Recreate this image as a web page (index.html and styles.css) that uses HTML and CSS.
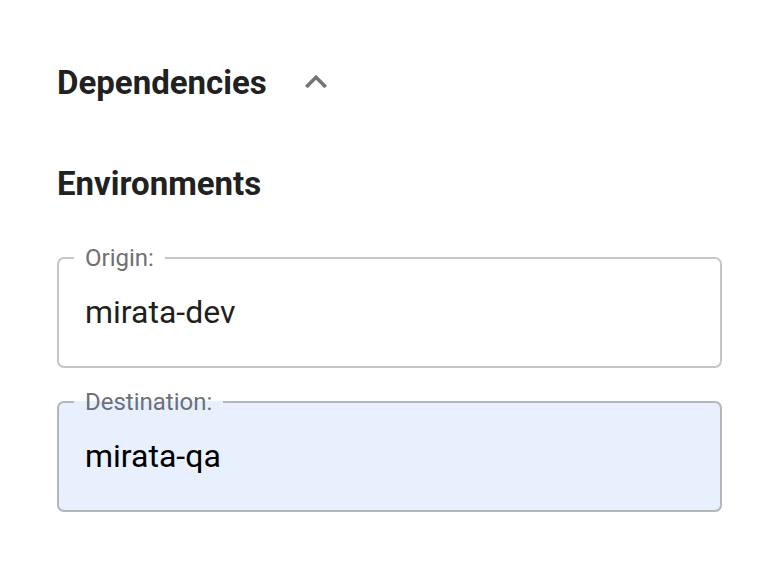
FILE: index.html
```html
<html>
<head>
<title>Dependencies</title>
<link rel="stylesheet" href="styles.css">
</head>
<body>

<div class="panel">

<div class="sectionHead">
<h2>Dependencies</h2>
<svg class="toggle" viewBox="0 0 24 24"><path d="M12 8l-6 6 1.41 1.41L12 10.83l4.59 4.58L18 14z"/></svg>
</div>

<h3>Environments</h3>

<fieldset class="field">
<legend>Origin:</legend>
<div class="value">mirata-dev</div>
</fieldset>

<fieldset class="field filled">
<legend>Destination:</legend>
<div class="value">mirata-qa</div>
</fieldset>

</div>

</body>
</html>
```

FILE: styles.css
```css
body {
  margin: 0;
  background-color: white;
  font-family: Roboto, "Liberation Sans", sans-serif;
}

.panel {
  padding: 60px 42px 0 57px;
}

.sectionHead {
  display: flex;
  align-items: center;
  height: 44px;
}

.sectionHead h2 {
  margin: 0;
  font-size: 33px;
  font-weight: bold;
  color: #212121;
}

.toggle {
  width: 44px;
  height: 44px;
  margin-left: 27px;
  fill: #757575;
}

h3 {
  margin: 60px 0 40px 0;
  font-size: 33px;
  line-height: 40px;
  font-weight: bold;
  color: #212121;
}

.field {
  margin: 0 0 20px 0;
  padding: 0 16px 0 15px;
  border: 2px solid #c6c6c6;
  border-radius: 7px;
}

.field legend {
  padding: 0 11px;
  font-size: 24px;
  line-height: 28px;
  color: #707070;
}

.value {
  padding: 21px 11px 35px 11px;
  font-size: 32px;
  line-height: 38px;
  color: #1f1f1f;
}

.filled {
  background-color: #e8f0fe;
  border-color: #b3b6bb;
}

.filled legend {
  color: #6c7078;
}

.filled .value {
  color: black;
}
```
